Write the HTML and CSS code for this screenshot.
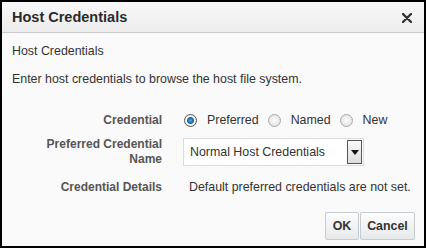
FILE: index.html
```html
<!DOCTYPE html>
<html lang="en">

<head>
  <meta charset="UTF-8">
  <title>Host Credentials</title>
  <link rel="stylesheet" href="styles.css">
</head>

<body>
  <div class="dialog">
    <div class="header">
      <span class="title">Host Credentials</span>
      <svg class="close" width="10" height="10" viewBox="0 0 10 10">
        <path d="M1 1L9 9M9 1L1 9" stroke="#333" stroke-width="2.4" stroke-linecap="round" />
      </svg>
    </div>
    <div class="content">
      <p class="sub">Host Credentials</p>
      <p class="intro">Enter host credentials to browse the host file system.</p>
      <div class="form">
        <div class="label">Credential</div>
        <div class="radios">
          <span class="radio on"></span><span class="opt">Preferred</span>
          <span class="radio"></span><span class="opt">Named</span>
          <span class="radio"></span><span class="opt">New</span>
        </div>
        <div class="label">Preferred Credential<br>Name</div>
        <div class="select">
          <span class="value">Normal Host Credentials</span>
          <span class="arrow"></span>
        </div>
        <div class="label last">Credential Details</div>
        <div class="details last">Default preferred credentials are not set.</div>
      </div>
    </div>
    <div class="footer">
      <button class="btn ok">OK</button>
      <button class="btn cancel">Cancel</button>
    </div>
  </div>
</body>

</html>
```

FILE: styles.css
```css
* {
  padding: 0;
  margin: 0;
  box-sizing: border-box;
}

body {
  font-family: "Liberation Sans", Arial, sans-serif;
  font-size: 12.4px;
  color: #333;
}

.dialog {
  width: 426px;
  height: 248px;
  border: 2px solid #000;
  background-color: #fafafa;
  display: flex;
  flex-direction: column;
}

.header {
  height: 31px;
  flex-shrink: 0;
  display: flex;
  align-items: center;
  justify-content: space-between;
  padding: 0 12px 0 10px;
  background: linear-gradient(#f8f8f8, #ececec);
  border-bottom: 1px solid #c9c9c9;
}

.title {
  font-size: 14.5px;
  font-weight: bold;
  color: #2b2b2b;
}

.close {
  display: block;
  margin-top: 1px;
}

.content {
  flex: 1;
  padding: 10px 10px 0;
}

.sub {
  line-height: 16px;
}

.intro {
  margin-top: 12px;
  line-height: 16px;
}

.form {
  margin-top: 24px;
  display: grid;
  grid-template-columns: 150px 1fr;
  column-gap: 21px;
  row-gap: 8px;
  align-items: center;
}

.label {
  text-align: right;
  font-size: 12px;
  font-weight: bold;
  color: #555;
  line-height: 15px;
}

.last {
  margin-top: 4px;
}

.radios {
  display: flex;
  align-items: center;
  height: 18px;
}

.radio {
  width: 13px;
  height: 13px;
  border-radius: 50%;
  border: 1px solid #a8a8a8;
  background: radial-gradient(#fdfdfd, #dcdcdc);
  margin-right: 10px;
}

.radio.on {
  margin-left: 1px;
  border-color: #555;
  background: radial-gradient(circle, #4fa8e8 0, #1b5fa0 3px, #fff 4px, #e6e6e6 6px);
}

.opt {
  margin-right: 9px;
}

.select {
  width: 181px;
  height: 28px;
  border: 1px solid #dcdcdc;
  background-color: #fff;
  display: flex;
  align-items: center;
  justify-content: space-between;
  padding: 0 1px 0 6px;
}

.arrow {
  width: 15px;
  height: 24px;
  border: 1px solid #555;
  background: linear-gradient(#fafafa, #dcdcdc);
  position: relative;
}

.arrow::after {
  content: "";
  position: absolute;
  left: 3px;
  top: 9px;
  border-left: 4px solid transparent;
  border-right: 4px solid transparent;
  border-top: 5px solid #111;
}

.details {
  line-height: 16px;
  padding-left: 6px;
}

.footer {
  display: flex;
  justify-content: flex-end;
  gap: 1px;
  padding: 0 9px 6px;
}

.btn {
  height: 28px;
  font-family: "Liberation Sans", Arial, sans-serif;
  font-size: 12.4px;
  font-weight: bold;
  color: #333;
  border: 1px solid #c5ccd2;
  border-radius: 2px;
  background: linear-gradient(#fdfdfd, #e6e8ea);
}

.ok {
  width: 34px;
}

.cancel {
  width: 55px;
}
```
